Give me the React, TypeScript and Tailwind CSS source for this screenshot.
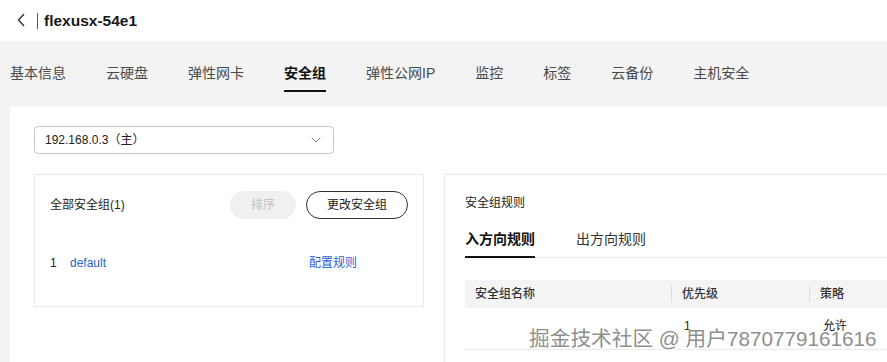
import { ChevronDown } from 'lucide-react'

const tabs = ['基本信息', '云硬盘', '弹性网卡', '安全组', '弹性公网IP', '监控', '标签', '云备份', '主机安全']

export default function App() {
  return (
    <div
      className="relative h-[362px] w-[887px] overflow-hidden bg-[#f3f3f3] text-[#333]"
      style={{ fontFamily: '"Liberation Sans", "Noto Sans CJK SC", sans-serif' }}
    >
      {/* Header */}
      <div className="flex h-[41px] items-center bg-white pl-[17px]">
        <svg width="9" height="14" viewBox="0 0 9 14" className="mt-[-1px]">
          <path d="M7 1 L1.5 7 L7 13" fill="none" stroke="#333" strokeWidth="1.4" />
        </svg>
        <div className="ml-[11px] h-[16px] w-px bg-[#555]" />
        <h1 className="ml-[6px] text-[15.5px] font-bold text-[#191919]">flexusx-54e1</h1>
      </div>

      {/* Tabs */}
      <div className="flex h-[66px] gap-10 pl-[10px] pt-[22px]">
        {tabs.map((t) => (
          <div key={t} className="flex flex-col">
            <span
              className={
                t === '安全组'
                  ? 'text-[14px] leading-5 font-bold text-[#111]'
                  : 'text-[14px] leading-5 text-[#4a4a4a]'
              }
            >
              {t}
            </span>
            {t === '安全组' && <div className="mt-[7px] h-[2px] bg-[#111]" />}
          </div>
        ))}
      </div>

      {/* Content panel */}
      <div className="ml-[10px] h-[255px] bg-white pl-6 pt-[19px]">
        <div className="flex h-[28px] w-[300px] items-center justify-between rounded-[4px] border border-[#c8c8c8] pl-[10px] pr-[9px]">
          <span className="text-[12px] text-[#222]">192.168.0.3（主）</span>
          <ChevronDown size={16} strokeWidth={1.3} className="text-[#666]" />
        </div>

        <div className="mt-5 flex gap-[20px]">
          {/* Left card */}
          <div className="h-[133px] w-[390px] shrink-0 border border-[#e9e9e9] px-[15px] pt-[16px]">
            <div className="flex h-[28px] items-center">
              <span className="text-[12px] text-[#222]">全部安全组(1)</span>
              <div className="ml-auto flex gap-[10px]">
                <div className="flex h-[28px] w-[66px] items-center justify-center rounded-full bg-[#f0f0f0] text-[12px] text-[#c2c2c2]">
                  排序
                </div>
                <div className="flex h-[28px] w-[102px] items-center justify-center rounded-full border border-[#333] text-[12px] text-[#222]">
                  更改安全组
                </div>
              </div>
            </div>
            <div className="mt-[36px] flex h-4 items-center text-[12px]">
              <span className="w-[20px] text-[#222]">1</span>
              <span className="text-[#2a5fd6]">default</span>
              <span className="ml-auto mr-[51px] text-[#2a5fd6]">配置规则</span>
            </div>
          </div>

          {/* Right card */}
          <div className="h-[200px] w-[460px] shrink-0 border border-[#e9e9e9] pl-5 pt-[20px]">
            <div className="text-[12px] leading-4 text-[#222]">安全组规则</div>
            <div className="mt-[18px] flex gap-[41px] border-b border-[#ebebeb]">
              <div className="-mb-px border-b-2 border-[#111] pb-[7px] text-[14px] leading-5 font-bold text-[#111]">
                入方向规则
              </div>
              <div className="pb-[7px] text-[14px] leading-5 text-[#333]">出方向规则</div>
            </div>
            <div className="mt-[22px] flex h-[28px] items-center bg-[#f4f4f4] text-[12px] font-medium text-[#333]">
              <div className="flex w-[206px] items-center pl-[10px]">安全组名称</div>
              <div className="h-4 w-px bg-[#dcdcdc]" />
              <div className="w-[137px] pl-[10px]">优先级</div>
              <div className="h-4 w-px bg-[#dcdcdc]" />
              <div className="pl-[10px]">策略</div>
            </div>
            <div className="flex h-[42px] items-start border-b border-[#ebebeb] pt-[10px] text-[12px] leading-4 text-[#222]">
              <div className="w-[207px]" />
              <div className="w-[138px] pl-[12px]">1</div>
              <div className="pl-[13px]">允许</div>
            </div>
          </div>
        </div>
      </div>

      {/* Watermark */}
      <div
        className="absolute left-[529px] top-[325px] text-[20.7px] leading-7 whitespace-nowrap text-[#8f8f8f]"
        style={{ textShadow: '0 0 2px #fff, 0 0 2px #fff, 0 0 2px #fff' }}
      >
        掘金技术社区 @ 用户7870779161616
      </div>
    </div>
  )
}
